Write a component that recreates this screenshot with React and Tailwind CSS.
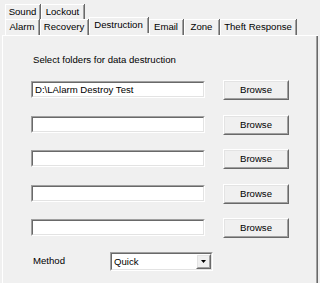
import React from 'react';

const Tab = ({ label, width, selected }) => (
    <div
        className={`flex h-full shrink-0 ${selected ? 'relative z-10 -mt-[2px] h-[19px] bg-[#f0f0f0]' : ''}`}
        style={{ width }}
    >
        <div className="flex flex-1 border-l border-t border-white">
            <div className="flex flex-1 items-center justify-center border-r border-[#a0a0a0] pb-[1px]">
                {label}
            </div>
        </div>
        <div className="w-px bg-[#696969]" />
    </div>
);

const Sunken = ({ className, children }) => (
    <div className={`border border-t-[#a0a0a0] border-l-[#a0a0a0] border-b-white border-r-white ${className}`}>
        <div className="h-full border border-t-[#696969] border-l-[#696969] border-b-[#e3e3e3] border-r-[#e3e3e3] bg-white">
            {children}
        </div>
    </div>
);

const Raised = ({ className, children }) => (
    <div className={`border border-t-white border-l-white border-b-[#696969] border-r-[#696969] ${className}`}>
        <div className="flex h-full items-center justify-center border border-t-[#e3e3e3] border-l-[#e3e3e3] border-b-[#a0a0a0] border-r-[#a0a0a0] bg-[#f0f0f0]">
            {children}
        </div>
    </div>
);

const folders = ['D:\\LAlarm Destroy Test', '', '', '', ''];

export default function App() {
    return (
        <div className="w-[320px] h-[283px] overflow-hidden bg-[#f0f0f0] text-[9.6px] leading-[12px] text-black font-['Liberation_Sans',Arial,sans-serif]">
            <div className="flex h-[15px] mt-[4px] pl-[5px]">
                <Tab label="Sound" width={36} />
                <Tab label="Lockout" width={44} />
            </div>
            <div className="flex h-[16px] items-start pl-[5px]">
                <Tab label="Alarm" width={35} />
                <Tab label="Recovery" width={49} />
                <Tab label="Destruction" width={60} selected />
                <Tab label="Email" width={35} />
                <Tab label="Zone" width={36} />
                <Tab label="Theft Response" width={77} />
            </div>
            <div className="ml-[2px] w-[316px] h-[260px] border-l border-t border-white flex">
                <div className="flex-1 border-r border-[#a0a0a0] pl-[28px]">
                    <div className="mt-[18px] ml-[2px]">Select folders for data destruction</div>
                    <div className="mt-[14px] flex flex-col gap-[14.5px]">
                        {folders.map((f, i) => (
                            <div key={i} className="flex items-start gap-[18px]">
                                <Sunken className="mt-[1px] w-[174px] h-[17px]">
                                    <div className="pl-[2px] leading-[13px]">{f}</div>
                                </Sunken>
                                <Raised className="w-[66px] h-[20px]">Browse</Raised>
                            </div>
                        ))}
                    </div>
                    <div className="mt-[14px] flex items-center">
                        <div className="ml-[2px] w-[77px] pb-[2px]">Method</div>
                        <Sunken className="w-[103px] h-[19px]">
                            <div className="flex h-full items-center justify-between">
                                <span className="pl-[2px] pt-[1px]">Quick</span>
                                <Raised className="w-[15px] h-full">
                                    <svg width="5" height="3" viewBox="0 0 5 3">
                                        <path d="M0 0H5L2.5 3Z" fill="#000" />
                                    </svg>
                                </Raised>
                            </div>
                        </Sunken>
                    </div>
                </div>
                <div className="w-px bg-[#696969]" />
            </div>
        </div>
    );
}
